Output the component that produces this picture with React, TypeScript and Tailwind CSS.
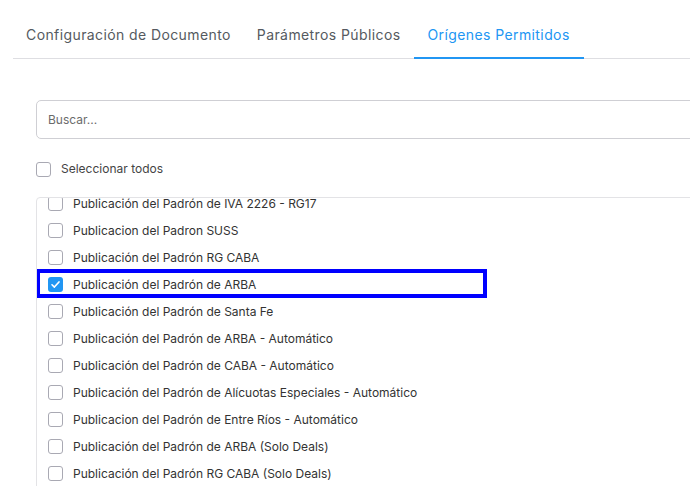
import React from "react";

const tabs = [
  { label: "Configuración de Documento", active: false },
  { label: "Parámetros Públicos", active: false },
  { label: "Orígenes Permitidos", active: true },
];

const origins = [
  { label: "Publicación del Padrón de IVA 2226 - RG17", checked: false },
  { label: "Publicacion del Padron SUSS", checked: false },
  { label: "Publicación del Padrón RG CABA", checked: false },
  { label: "Publicación del Padrón de ARBA", checked: true, focused: true },
  { label: "Publicación del Padrón de Santa Fe", checked: false },
  { label: "Publicación del Padrón de ARBA - Automático", checked: false },
  { label: "Publicación del Padrón de CABA - Automático", checked: false },
  { label: "Publicación del Padrón de Alícuotas Especiales - Automático", checked: false },
  { label: "Publicacion del Padrón de Entre Ríos - Automático", checked: false },
  { label: "Publicación del Padrón de ARBA (Solo Deals)", checked: false },
  { label: "Publicación del Padrón RG CABA (Solo Deals)", checked: false },
];

function Box({ checked }: { checked: boolean }) {
  if (checked) {
    return (
      <span className="flex h-[15px] w-[15px] shrink-0 items-center justify-center rounded-[3px] bg-[#2196f3]">
        <svg width="11" height="11" viewBox="0 0 12 12" fill="none">
          <path d="M2.2 6.3 L4.8 8.8 L9.8 3.2" stroke="white" strokeWidth="1.8" strokeLinecap="round" strokeLinejoin="round" />
        </svg>
      </span>
    );
  }
  return <span className="h-[15px] w-[15px] shrink-0 rounded-[3px] border border-[#a9a9b3] bg-white" />;
}

export default function App() {
  return (
    <div className="h-[486px] w-[690px] overflow-hidden bg-white font-['Inter',sans-serif] text-[#333]">
      {/* tab strip */}
      <div className="ml-[13px] mt-[18px] flex w-[720px] border-b border-[#dedee2]">
        {tabs.map((t) => (
          <div
            key={t.label}
            className={
              t.active
                ? "-mb-px border-b-2 border-[#2196f3] px-[14px] pb-[12px] pt-[6px] text-[14px] tracking-[0.4px] text-[#2196f3]"
                : "px-[13px] pb-[13px] pt-[6px] text-[14px] tracking-[0.4px] text-[#555a60]"
            }
          >
            {t.label}
          </div>
        ))}
      </div>

      <div className="ml-[36px] w-[720px]">
        {/* search */}
        <div className="mt-[41px] flex h-[39px] items-center rounded-[5px] border border-[#cfcfd4] px-[11px] text-[12px] text-[#6b6b6b]">
          Buscar...
        </div>

        {/* select all */}
        <label className="mt-[21px] flex items-center gap-[10px] text-[12px] text-[#444]">
          <Box checked={false} />
          <span>Seleccionar todos</span>
        </label>

        {/* scrolled list of origins */}
        <div className="mt-[19px] h-[300px] overflow-hidden rounded-t-[4px] border border-[#e3e3e6]">
          <div className="-mt-[8px]">
            {origins.map((o) => (
              <div key={o.label} className="relative flex h-[27px] items-center gap-[10px] pl-[11px] text-[12px] text-[#333]">
                {o.focused && (
                  <span className="pointer-events-none absolute left-[-1px] top-[-2px] h-[29px] w-[451px] border-[4px] border-[#0000ff]" />
                )}
                <Box checked={o.checked} />
                <span>{o.label}</span>
              </div>
            ))}
          </div>
        </div>
      </div>
    </div>
  );
}
